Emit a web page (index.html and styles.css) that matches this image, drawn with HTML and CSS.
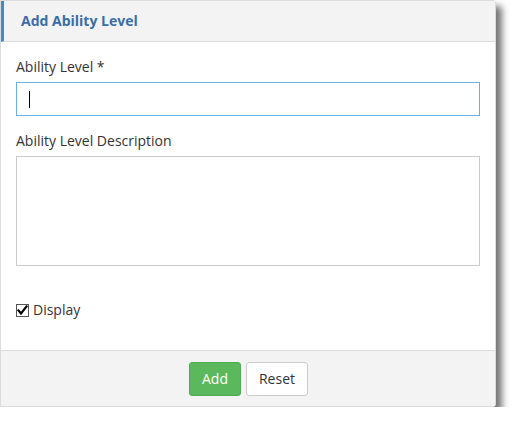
FILE: index.html
```html
<!DOCTYPE html>
<html>
<head>
<meta charset="utf-8">
<link rel="stylesheet" href="styles.css">
</head>
<body>
<div class="dialog">
  <div class="dialog-header">
    <h3 class="dialog-title">Add Ability Level</h3>
  </div>
  <div class="dialog-body">
    <div class="form-group">
      <label class="field-label">Ability Level *</label>
      <div class="input focused"><span class="caret"></span></div>
    </div>
    <div class="form-group">
      <label class="field-label">Ability Level Description</label>
      <div class="textarea"></div>
    </div>
    <label class="check">
      <span class="check-box">
        <svg width="13" height="13" viewBox="0 0 13 13">
          <rect x="0.5" y="0.5" width="12" height="12" fill="#fff" stroke="#555" stroke-width="1"/>
          <path d="M2.5 6.5 L5 9.5 L10.5 2.5" fill="none" stroke="#000" stroke-width="2.2" stroke-linecap="square" stroke-linejoin="miter"/>
        </svg>
      </span>
      <span class="check-text">Display</span>
    </label>
  </div>
  <div class="dialog-footer">
    <button class="btn btn-success">Add</button>
    <button class="btn btn-default">Reset</button>
  </div>
</div>
</body>
</html>
```

FILE: styles.css
```css
* { box-sizing: border-box; }
html, body { margin: 0; padding: 0; background: #fff; }
body {
  font-family: "Open Sans", "Liberation Sans", sans-serif;
  font-size: 14px;
  line-height: 20px;
  color: #333;
}
.dialog {
  width: 496px;
  height: 407px;
  border: 1px solid #dcdcdc;
  border-radius: 0 3px 3px 0;
  background: #fff;
  box-shadow: 6px 6px 7px rgba(0, 0, 0, 0.55);
  display: flex;
  flex-direction: column;
}
.dialog-header {
  height: 41px;
  background: #f3f3f3;
  border-left: 3px solid #428bca;
  border-bottom: 1px solid #dcdcdc;
  display: flex;
  align-items: center;
  padding-left: 17px;
}
.dialog-title {
  margin: 0;
  font-size: 14px;
  font-weight: 700;
  color: #3b6ea5;
  line-height: 20px;
}
.dialog-body {
  flex: 1;
  padding: 15px 15px 0 15px;
}
.form-group { margin-bottom: 15px; }
.field-label {
  display: block;
  margin-bottom: 5px;
  font-weight: 400;
}
.input {
  height: 34px;
  border: 1px solid #ccc;
  padding: 0 12px;
  display: flex;
  align-items: center;
}
.input.focused { border-color: #66afe9; }
.caret {
  width: 1px;
  height: 17px;
  background: #000;
}
.textarea {
  height: 110px;
  border: 1px solid #ccc;
}
.check {
  display: flex;
  align-items: center;
  gap: 4px;
  margin-top: 34px;
  height: 20px;
}
.check-box { display: flex; width: 13px; height: 13px; }
.dialog-footer {
  height: 56px;
  background: #f3f3f3;
  border-top: 1px solid #dcdcdc;
  display: flex;
  justify-content: center;
  align-items: center;
  gap: 5px;
  padding-left: 1px;
}
.btn {
  font-family: inherit;
  font-size: 14px;
  line-height: 20px;
  height: 34px;
  padding: 6px 12px;
  border: 1px solid transparent;
  border-radius: 3px;
  margin: 0;
}
.btn-success {
  background: #5cb85c;
  border-color: #4cae4c;
  color: #fff;
}
.btn-default {
  background: #fff;
  border-color: #ccc;
  color: #333;
}
```
